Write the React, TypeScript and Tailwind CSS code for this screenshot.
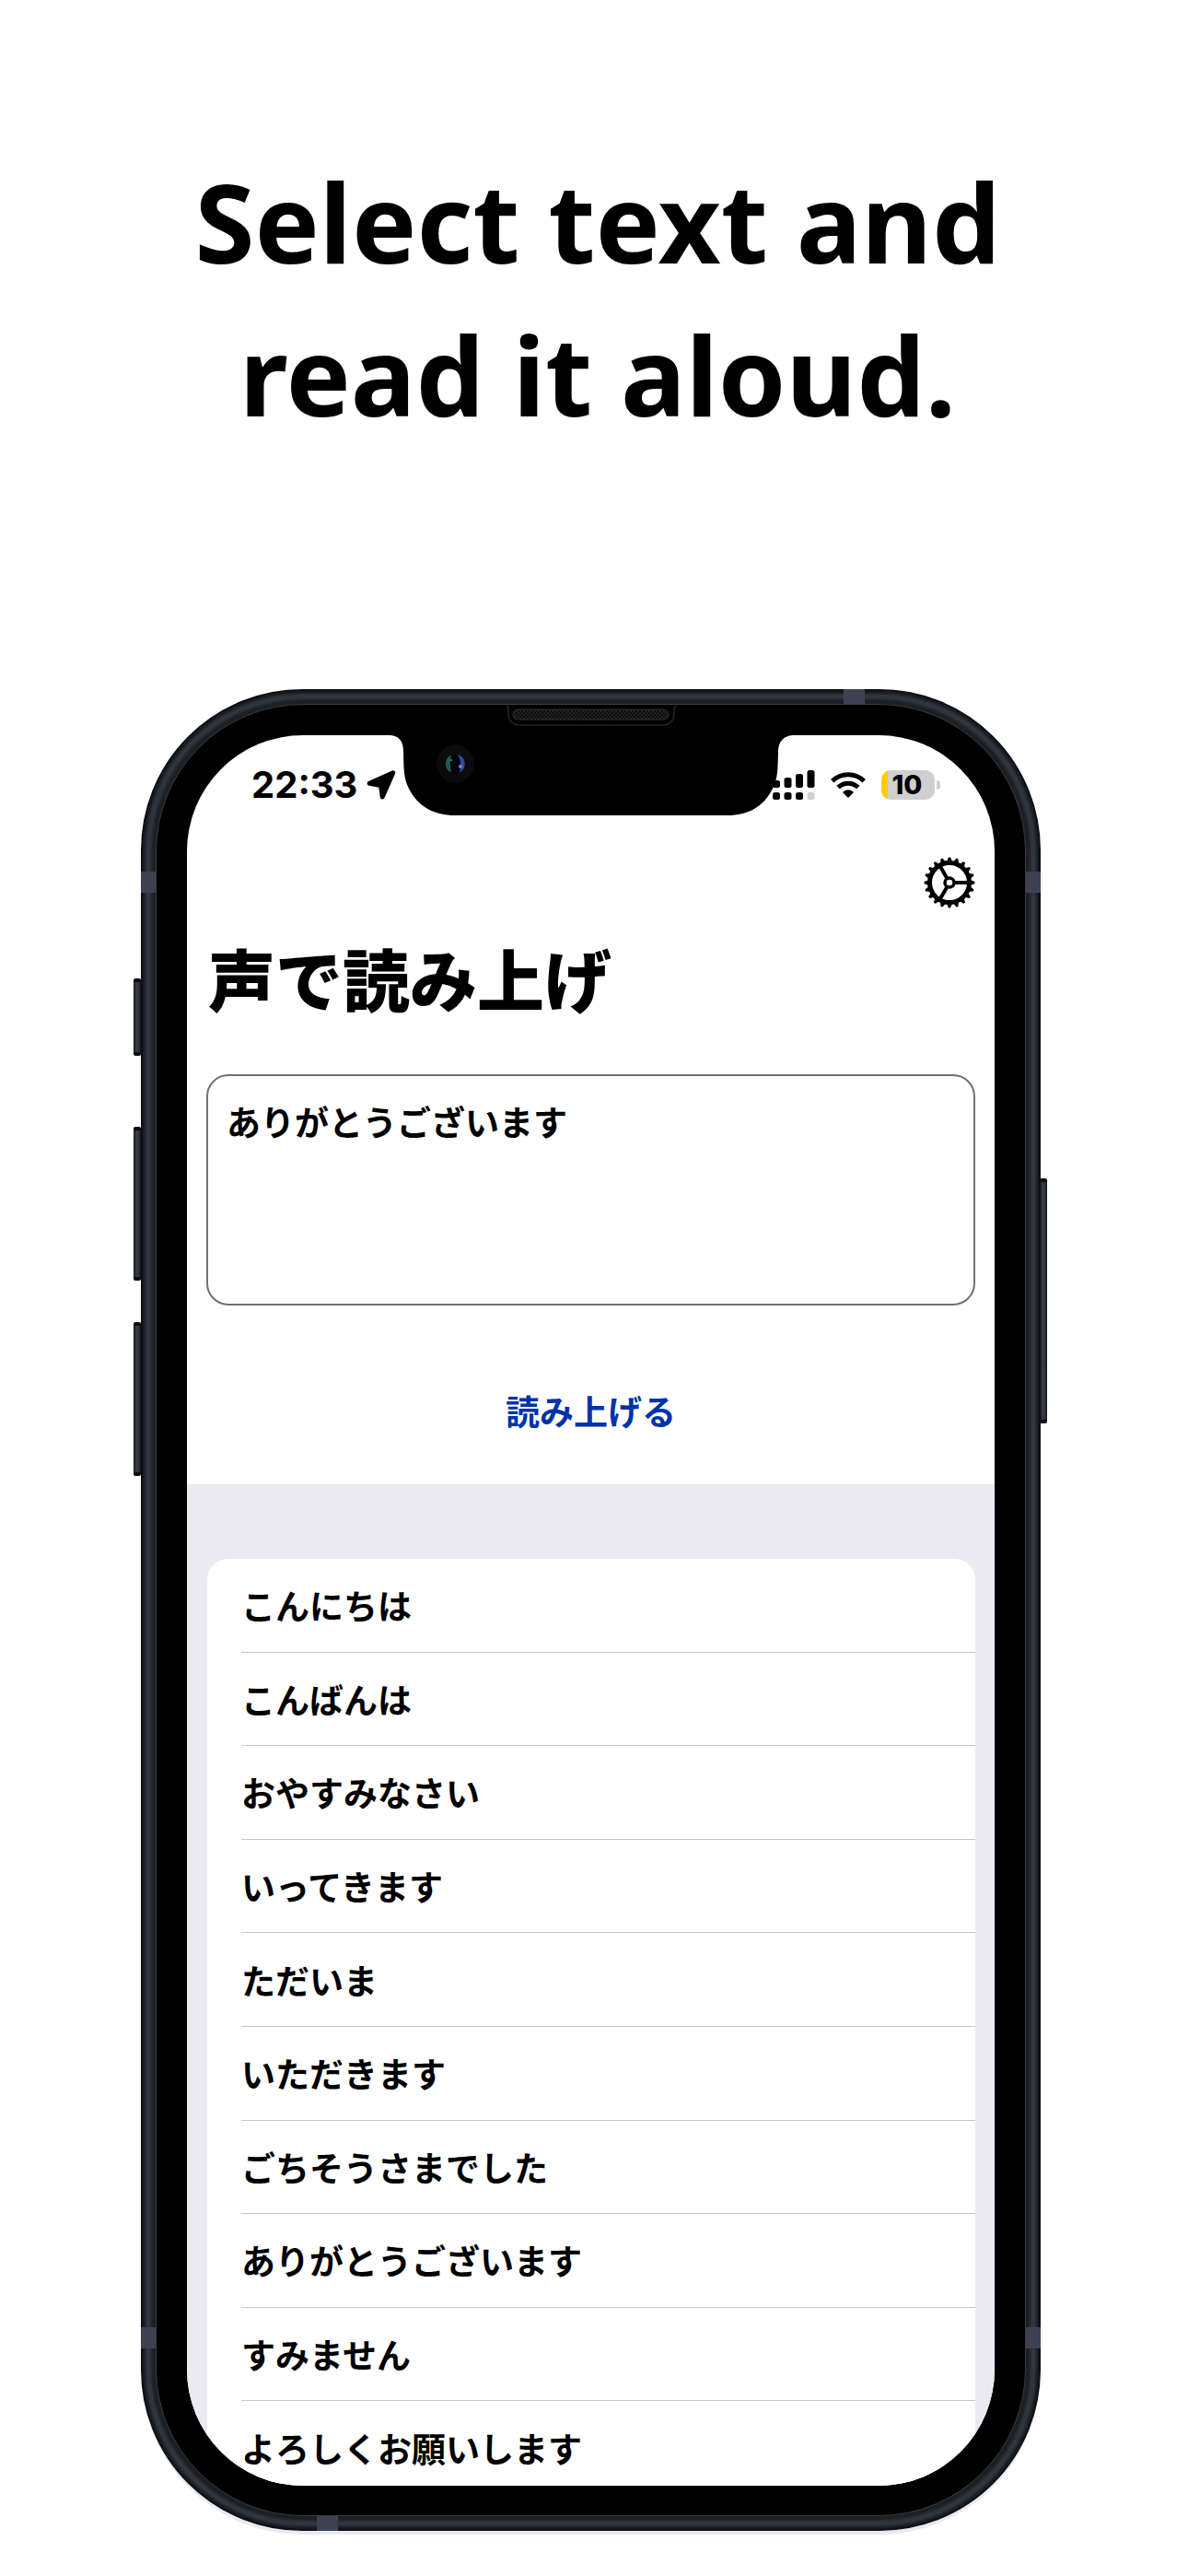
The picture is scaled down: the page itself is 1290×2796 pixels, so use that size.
import React from "react";

const PHRASES = [
  "こんにちは",
  "こんばんは",
  "おやすみなさい",
  "いってきます",
  "ただいま",
  "いただきます",
  "ごちそうさまでした",
  "ありがとうございます",
  "すみません",
  "よろしくお願いします",
];

function LocationIcon() {
  return (
    <svg viewBox="0 0 32 32" className="h-8 w-8" aria-hidden="true">
      <path
        d="M28.8 2.8 L3.200 14.400 L15.500 16.500 L17.200 29 Z"
        fill="black"
        stroke="black"
        strokeWidth="5"
        strokeLinejoin="round"
      />
    </svg>
  );
}

function SignalIcon() {
  return (
    <svg viewBox="0 0 46 32" className="h-8 w-[46px]" aria-hidden="true">
      <rect x="0" y="11" width="8" height="8" rx="2.5" />
      <rect x="12.5" y="8" width="8" height="11" rx="2.5" />
      <rect x="25" y="4" width="8" height="15" rx="2.5" />
      <rect x="37.5" y="0" width="8" height="19" rx="2.5" />
      <rect x="0" y="24" width="8" height="8" rx="2.5" />
      <rect x="12.5" y="24" width="8" height="8" rx="2.5" />
      <rect x="25" y="24" width="8" height="8" rx="2.5" />
      <rect x="37.5" y="24" width="8" height="8" rx="2.5" fill="#cfcfcf" />
    </svg>
  );
}

function WifiIcon() {
  return (
    <svg viewBox="0 0 38 28" className="h-7 w-[38px]" aria-hidden="true">
      <g fill="none" stroke="black" strokeWidth="5">
        <path d="M1.8 9.8 A24.5 24.5 0 0 1 36.2 9.8" />
        <path d="M8.2 16.6 A15.4 15.4 0 0 1 29.8 16.6" />
      </g>
      <path
        d="M19 27 L14 22 A7.2 7.2 0 0 1 24 22 Z"
        stroke="black"
        strokeWidth="1.5"
        strokeLinejoin="round"
      />
    </svg>
  );
}

function Battery() {
  return (
    <div className="flex items-center gap-[2px]">
      <div className="flex h-8 w-[58px] items-center justify-center rounded-[10px] bg-[linear-gradient(90deg,#ffcc00_7px,#cfcfcf_7px)] pr-[2px] text-[29px] leading-8 font-extrabold">
        10
      </div>
      <svg viewBox="0 0 4 10" className="h-[10px] w-1" aria-hidden="true">
        <path d="M0 0 A5 5 0 0 1 0 10 Z" fill="#cfcfcf" />
      </svg>
    </div>
  );
}

function GearIcon() {
  const teeth = Array.from({ length: 20 }, (_, i) => i * 18);
  return (
    <svg viewBox="-28 -28 56 56" className="h-14 w-14" aria-hidden="true">
      <g stroke="black" fill="none">
        <circle r="21.5" strokeWidth="5" />
        <circle r="5" strokeWidth="3.5" />
        {[0, 120, 240].map((a) => (
          <path key={a} d="M6 0 H21" strokeWidth="4" transform={`rotate(${a})`} />
        ))}
      </g>
      {teeth.map((a) => (
        <path
          key={a}
          d="M22.5 -3.2 Q25 -1.8 27.2 -1.3 Q28 0 27.2 1.3 Q25 1.8 22.5 3.2 Z"
          transform={`rotate(${a})`}
        />
      ))}
    </svg>
  );
}

function Notch() {
  return (
    <svg viewBox="0 0 437 88" className="h-[88px] w-[437px]" aria-hidden="true">
      <path d="M0 0 C9 1 13.500 6 14 16 C14.500 36 14 46 20 58 C30 78 48 87 70 87 H366 C388 87 405 78 415 58 C421 46 420.500 36 421 16 C422 6 427 1 437 0 Z" />
      <circle cx="70.500" cy="31" r="20.500" fill="#0b0b0b" />
      <circle cx="70.500" cy="31" r="10.500" fill="#03050a" />
      <path d="M66 21.500 A10.500 10.500 0 0 0 66 40.500 Q63.500 31 66 21.500 Z" fill="#1f5f55" />
      <path d="M73 21 A10.500 10.500 0 0 1 75 40.500 Q78 30 73 21 Z" fill="#2c4a9c" />
      <circle cx="76" cy="34" r="2" fill="#8a7fc0" />
      <circle cx="66" cy="27" r="1" fill="#59a08f" />
    </svg>
  );
}

function Speaker() {
  return (
    <svg viewBox="0 0 184 24" className="h-6 w-[184px]" aria-hidden="true">
      <defs>
        <pattern id="mesh" width="4" height="4" patternUnits="userSpaceOnUse">
          <rect width="4" height="4" fill="#0c0c0d" />
          <rect width="2" height="2" fill="#222325" />
          <rect x="2" y="2" width="2" height="2" fill="#222325" />
        </pattern>
      </defs>
      <path
        d="M0 1 Q2 1 2 6 V10 Q3 22 15 22 H169 Q181 22 182 10 V6 Q182 1 184 1"
        fill="black"
        stroke="#262628"
        strokeWidth="1.5"
      />
      <rect x="7" y="5" width="169" height="11" rx="5.500" fill="url(#mesh)" stroke="#333335" />
    </svg>
  );
}

function SideKey({ className }: { className: string }) {
  return (
    <div
      className={`absolute w-2 rounded-[2px] border-y-4 border-[#0b0e12] bg-[linear-gradient(90deg,#14171b,#3a3f45_40%,#2b3036_75%,#0e1115)] ${className}`}
    />
  );
}

function Band({ className }: { className: string }) {
  return <div className={`absolute bg-[#3e4152] ${className}`} />;
}

function AppScreen() {
  return (
    <div className="relative flex flex-col overflow-hidden rounded-[126px] bg-white">
      <div className="absolute inset-x-0 top-0 flex justify-center pl-[2px]">
        <Notch />
      </div>

      <header className="flex h-[107px] items-center justify-between pr-[59px] pl-[70px] font-[Inter]">
        <div className="flex items-center gap-[10px]">
          <time className="text-[40px] leading-none font-bold">22:33</time>
          <LocationIcon />
        </div>
        <div className="relative flex items-center gap-[17px]">
          <SignalIcon />
          <WifiIcon />
          <Battery />
        </div>
      </header>

      <div className="flex justify-end px-[21px] pt-[25px]">
        <button type="button" aria-label="設定">
          <GearIcon />
        </button>
      </div>

      <main className="flex flex-col">
        <div className="flex flex-col px-[21px]">
          <h2 className="pt-6 pl-[2px] text-[73px] leading-[100px] font-black">声で読み上げ</h2>
          <textarea
            aria-label="読み上げるテキスト"
            defaultValue="ありがとうございます"
            className="mt-14 h-[251px] w-full resize-none rounded-3xl border-2 border-[#707074] px-5 py-[22px] text-[37px] leading-[54px] font-bold outline-none"
          />
          <button
            type="button"
            className="mt-[87px] self-center text-[37px] leading-[54px] font-bold text-[#0033a8]"
          >
            読み上げる
          </button>
        </div>

        <div className="mt-[53px] h-[1087px] overflow-hidden bg-[#ebeaf0] pt-[81px] pr-[21px] pl-[22px]">
          <ul className="grid h-[1016px] auto-rows-fr rounded-t-[22px] bg-white pl-[37px]">
            {PHRASES.map((phrase) => (
              <li key={phrase} className="flex border-b-1 border-[#c6c6c8]">
                <button
                  type="button"
                  className="flex-1 text-left text-[37px] leading-[54px] font-bold"
                >
                  {phrase}
                </button>
              </li>
            ))}
          </ul>
        </div>
      </main>
    </div>
  );
}

export default function App() {
  return (
    <div className="min-h-screen overflow-hidden bg-white pb-11 font-['Noto_Sans_CJK_JP',sans-serif] text-black">
      <h1 className="pt-[158px] pl-2 text-center font-['Noto_Sans',sans-serif] text-[118px] leading-[166px] font-bold">
        Select text and
        <br />
        read it aloud.
      </h1>

      <div className="mt-[258px] pr-40 pl-[153px]">
        <div className="relative rounded-[175px] shadow-[0_5px_0_-1px_#ebeaf0]">
          <SideKey className="top-[314px] -left-2 h-[84px]" />
          <SideKey className="top-[475px] -left-2 h-[167px]" />
          <SideKey className="top-[687px] -left-2 h-[167px]" />
          <SideKey className="top-[531px] -right-[7px] h-[266px]" />

          <div className="relative rounded-[175px] border-2 border-[#0c0f14] bg-[#1c2025] p-[14px] shadow-[inset_0_0_3px_3px_#171b20,inset_0_0_3px_9px_#32383f]">
            <Band className="top-[196px] -left-[2px] h-[23px] w-4" />
            <Band className="top-[196px] -right-[2px] h-[23px] w-4" />
            <Band className="-left-[2px] bottom-[196px] h-[23px] w-4" />
            <Band className="-right-[2px] bottom-[196px] h-[23px] w-4" />
            <Band className="-top-[2px] right-[189px] h-4 w-[23px]" />
            <Band className="-bottom-[2px] left-[189px] h-4 w-[23px]" />
            <div className="relative rounded-[160px] border border-[#3a3a3c] bg-black px-[33px] pt-[33px] pb-8">
              <div className="absolute inset-x-0 top-0 flex justify-center">
                <Speaker />
              </div>
              <AppScreen />
            </div>
          </div>
        </div>
      </div>
    </div>
  );
}
